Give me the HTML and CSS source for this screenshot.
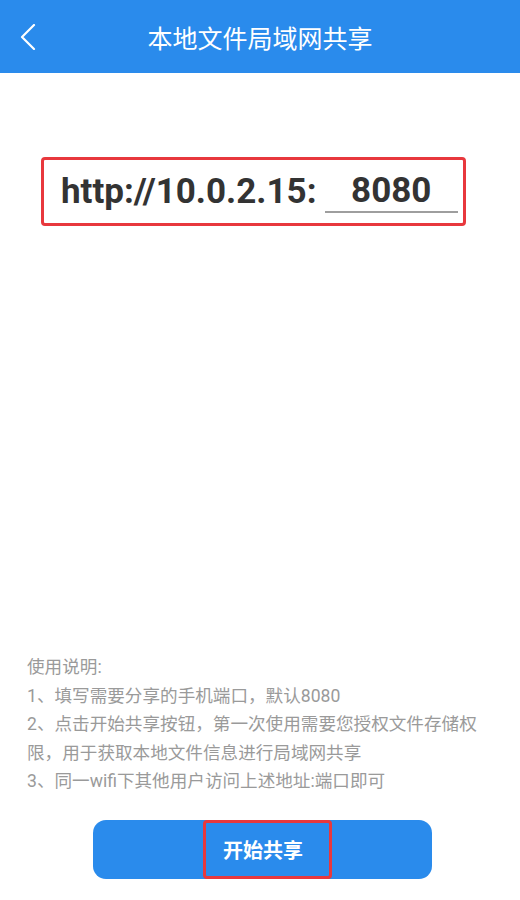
FILE: index.html
```html
<!DOCTYPE html>
<html lang="zh-CN">
<head>
<meta charset="utf-8">
<title>本地文件局域网共享</title>
<link rel="stylesheet" href="styles.css">
</head>
<body>
<div class="page">
  <header class="topbar">
    <div class="back">
      <svg width="16" height="26" viewBox="0 0 16 26"><polyline points="14,1 2,13 14,25" fill="none" stroke="#fff" stroke-width="2.2" stroke-linecap="round" stroke-linejoin="round"/></svg>
    </div>
    <div class="title">本地文件局域网共享</div>
    <div></div>
  </header>

  <div class="url-box">
    <span class="url-label">http://10.0.2.15:</span>
    <span class="port">8080</span>
  </div>

  <div class="notes">
    <p>使用说明:</p>
    <p>1、填写需要分享的手机端口，默认8080</p>
    <p>2、点击开始共享按钮，第一次使用需要您授权文件存储权限，用于获取本地文件信息进行局域网共享</p>
    <p>3、同一wifi下其他用户访问上述地址:端口即可</p>
  </div>

  <div class="btn-row">
    <button class="share-btn"><span class="btn-mark">开始共享</span></button>
  </div>
</div>
</body>
</html>
```

FILE: styles.css
```css
html, body {
  margin: 0;
  padding: 0;
  background: #ffffff;
}
.page {
  width: 520px;
  height: 900px;
  display: flex;
  flex-direction: column;
  font-family: Roboto, "Noto Sans CJK SC", sans-serif;
}
.topbar {
  height: 73px;
  background: #2a8bec;
  display: grid;
  grid-template-columns: 60px 1fr 60px;
  align-items: center;
  flex-shrink: 0;
}
.back {
  padding-left: 20px;
  display: flex;
  align-items: center;
  height: 26px;
}
.back svg { display: block; }
.title {
  text-align: center;
  color: #ffffff;
  font-size: 25px;
  font-family: "Noto Sans CJK SC", sans-serif;
  line-height: 30px;
}
.url-box {
  margin: 84px 54px 0 41px;
  height: 69px;
  box-sizing: border-box;
  border: 3px solid #e8383d;
  border-radius: 4px;
  display: flex;
  align-items: center;
  padding: 0 5px 0 17px;
}
.url-label {
  font-size: 35px;
  font-weight: bold;
  color: #333333;
  line-height: 41px;
}
.port {
  margin-left: 8px;
  width: 135px;
  text-align: center;
  font-size: 35px;
  font-weight: bold;
  color: #333333;
  line-height: 40px;
  border-bottom: 2px solid #9e9e9e;
}
.notes {
  margin-top: auto;
  padding: 0 28px 0 27px;
  color: #9a9a9a;
  font-size: 17.6px;
  line-height: 28.6px;
}
.notes p {
  margin: 0;
}
.btn-row {
  margin: 24px 0 21px 93px;
}
.share-btn {
  width: 339px;
  height: 59px;
  border: none;
  border-radius: 13px;
  background: #2a8bec;
  display: flex;
  align-items: center;
  justify-content: center;
  padding: 0 0 0 10px;
  font-family: "Noto Sans CJK SC", sans-serif;
}
.btn-mark {
  box-sizing: border-box;
  height: 59px;
  display: flex;
  align-items: center;
  padding: 0 26px 0 17px;
  border: 3px solid #e8383d;
  border-radius: 4px;
  color: #ffffff;
  font-size: 20px;
  font-weight: bold;
}
```
